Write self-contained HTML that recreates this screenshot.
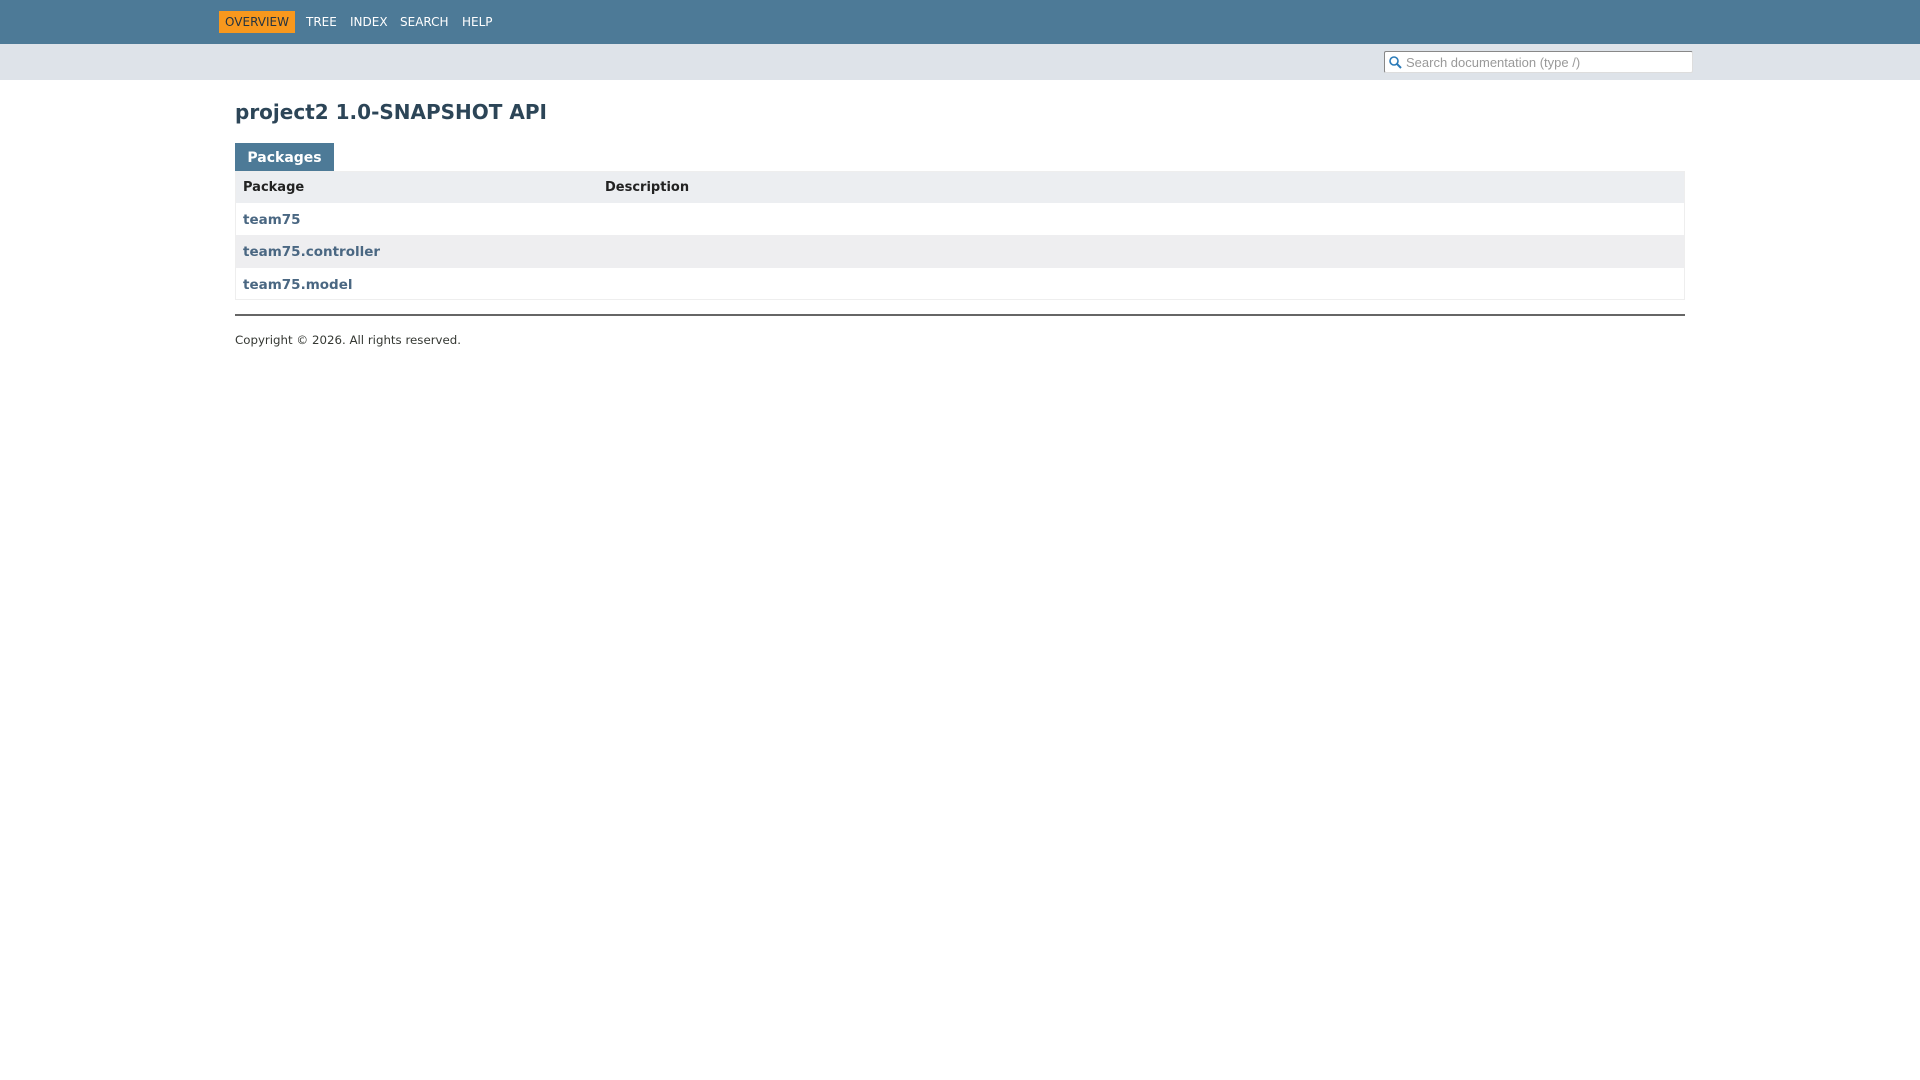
<!DOCTYPE html>
<html><head><meta charset="utf-8"><style>
*{margin:0;padding:0;box-sizing:border-box}
body{width:1920px;height:1080px;background:#fff;font-family:"DejaVu Sans",sans-serif;position:relative;overflow:hidden}
.nav{position:absolute;left:0;top:0;width:1920px;height:44px;background:#4d7a97}
.sub{position:absolute;left:0;top:44px;width:1920px;height:36px;background:#dee3e9}
.nl{position:absolute;top:11px;height:22px;line-height:22px;font-size:12px;color:#fff}
.ov{background:#f8981d;color:#253441;left:219px;width:76px;text-align:center}
.search{position:absolute;left:1384px;top:51px;width:309px;height:22px;background:#fff;border:1px solid #888;border-right-color:#ddd;border-bottom-color:#ddd;border-radius:2px;font-family:"Liberation Sans",sans-serif;font-size:13px;color:#999;line-height:21px;padding-left:21px}
h1{position:absolute;left:235px;top:98px;font-size:20px;font-weight:bold;color:#2c4557;line-height:28px}
.tab{position:absolute;left:235px;top:143px;width:99px;height:28px;background:#4d7a97;color:#fff;font-weight:bold;font-size:14px;line-height:30px;text-align:center}
.tbl{position:absolute;left:235px;top:171px;width:1450px;height:129px;border:1px solid #eee}
.row{position:absolute;left:0;width:1448px;font-weight:bold;font-size:13.5px}
.row span{position:absolute;left:7px}
.hd{top:0;height:31px;background:#eceef1;color:#222;line-height:32px;font-size:13px}
.r{height:33px;line-height:35px;color:#4a6782}
.alt{background:#eeeef0}
hr{position:absolute;left:235px;top:314px;width:1450px;border:0;border-top:2px solid #666}
.cp{position:absolute;left:235px;top:332px;font-size:11.8px;color:#353833;line-height:16px}
</style></head><body>
<div class="nav"></div>
<div class="nl ov">OVERVIEW</div>
<div class="nl" style="left:306px">TREE</div>
<div class="nl" style="left:350px">INDEX</div>
<div class="nl" style="left:400px">SEARCH</div>
<div class="nl" style="left:462px">HELP</div>
<div class="sub"></div>
<div class="search"><svg style="position:absolute;left:3px;top:3px" width="15" height="15" viewBox="0 0 15 15"><circle cx="6" cy="6" r="4" fill="none" stroke="#2a7ab8" stroke-width="1.6"/><path d="M9 9l4 4" stroke="#2a7ab8" stroke-width="2"/></svg>Search documentation (type /)</div>
<h1>project2 1.0-SNAPSHOT API</h1>
<div class="tab">Packages</div>
<div class="tbl">
<div class="row hd"><span>Package</span><span style="left:369px">Description</span></div>
<div class="row r" style="top:31px"><span>team75</span></div>
<div class="row r alt" style="top:63px"><span>team75.controller</span></div>
<div class="row r" style="top:96px"><span>team75.model</span></div>
</div>
<hr>
<div class="cp">Copyright © 2026. All rights reserved.</div>
</body></html>
